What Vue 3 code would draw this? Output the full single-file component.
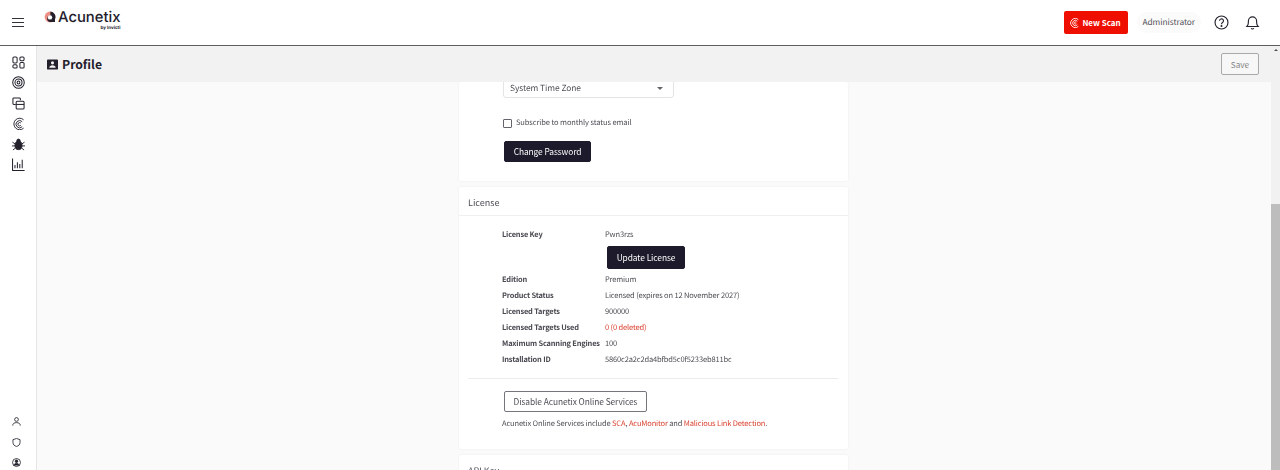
<script setup>
const licenseRows = [
  { label: 'Edition', value: 'Premium' },
  { label: 'Product Status', value: 'Licensed (expires on 12 November 2027)' },
  { label: 'Licensed Targets', value: '900000' },
  { label: 'Licensed Targets Used', value: '0 (0 deleted)', warn: true },
  { label: 'Maximum Scanning Engines', value: '100' },
  { label: 'Installation ID', value: '5860c2a2c2da4bfbd5c0f5233eb811bc' }
]
</script>

<template>
  <div class="app">
    <header class="topbar">
      <button class="burger" aria-label="Menu"><span></span><span></span><span></span></button>
      <div class="logo">
        <svg class="logo-mark" viewBox="0 0 12 12" width="12" height="12">
          <circle cx="6" cy="6" r="5.4" fill="#ee8f86" />
          <path d="M6.4.6a5.4 5.4 0 0 1 4.6 7.6V11H6.6A3.2 3.2 0 0 1 6.4 4.4 z" fill="#23202c" />
          <circle cx="6" cy="6.4" r="2.2" fill="#fff" />
        </svg>
        <div class="logo-text">
          <span class="logo-name">Acunetix</span>
          <span class="logo-by">by Invicti</span>
        </div>
      </div>
      <div class="top-actions">
        <button class="new-scan">
          <svg viewBox="0 0 12 12" width="10" height="10" fill="none" stroke="#fff" stroke-width="1.1">
            <path d="M10 2A5.4 5.4 0 1 0 10 10" />
            <path d="M8.8 3.8A3.2 3.2 0 1 0 8.8 8.2" />
            <path d="M7.5 5.2A1.2 1.2 0 1 0 7.5 6.8" />
          </svg>
          New Scan
        </button>
        <span class="user">Administrator</span>
        <svg class="top-icon" viewBox="0 0 16 16" width="15" height="15" fill="none" stroke="#23202c" stroke-width="1.2">
          <circle cx="8" cy="8" r="6.9" />
          <path d="M5.9 6.2a2.1 2.1 0 1 1 3.2 1.8C8.4 8.5 8 8.9 8 9.8" />
          <circle cx="8" cy="11.8" r=".5" fill="#23202c" />
        </svg>
        <svg class="top-icon bell" viewBox="0 0 16 16" width="15" height="15" fill="none" stroke="#23202c" stroke-width="1.2">
          <path d="M2 12.2c1-1 1.6-2 1.6-4.2V6.4a4.4 4.4 0 0 1 8.8 0V8c0 2.2.6 3.2 1.6 4.2z" />
          <path d="M6.5 14.2c.8.9 2.2.9 3 0" />
        </svg>
      </div>
    </header>

    <div class="body">
      <aside class="sidebar">
        <nav class="nav">
          <svg viewBox="0 0 14 14" width="13" height="13" fill="none" stroke="#23202c" stroke-width="1.1">
            <rect x="1" y="1" width="4.5" height="6.5" rx="1.2" />
            <rect x="8.5" y="1" width="4.5" height="4" rx="1.2" />
            <rect x="1" y="9.5" width="4.5" height="3.5" rx="1.2" />
            <rect x="8.5" y="7" width="4.5" height="6" rx="1.2" />
          </svg>
          <svg viewBox="0 0 14 14" width="13" height="13" fill="none" stroke="#23202c" stroke-width="1.1">
            <circle cx="7" cy="7" r="6.2" />
            <circle cx="7" cy="7" r="3.8" />
            <circle cx="7" cy="7" r="1.5" />
          </svg>
          <svg viewBox="0 0 14 14" width="13" height="13" fill="none" stroke="#23202c" stroke-width="1.1">
            <path d="M9 3.5V2a1 1 0 0 0-1-1H2a1 1 0 0 0-1 1v5a1 1 0 0 0 1 1h2" />
            <rect x="4.5" y="4.5" width="8.5" height="8.5" rx="1.2" />
            <path d="M4.5 8h8.5" />
          </svg>
          <svg viewBox="0 0 14 14" width="13" height="13" fill="none" stroke="#23202c" stroke-width="1">
            <path d="M12.5 3A6.2 6.2 0 1 0 12.5 12" />
            <path d="M11 5A3.9 3.9 0 1 0 11 10.5" />
            <path d="M9.5 6.5A1.8 1.8 0 1 0 9.5 9" />
          </svg>
          <svg viewBox="0 0 14 14" width="13" height="13" fill="#23202c" stroke="#23202c" stroke-width="1">
            <ellipse cx="7" cy="8" rx="3.8" ry="4.5" />
            <circle cx="7" cy="3" r="1.8" />
            <path d="M0.5 4.5l3 2M13.5 4.5l-3 2M0 8.5h3.5M14 8.5h-3.5M1 13l2.8-2.3M13 13l-2.8-2.3" fill="none" />
          </svg>
          <svg viewBox="0 0 14 14" width="13" height="13" fill="none" stroke="#23202c" stroke-width="1.1">
            <path d="M.6.5v12.9h13" />
            <path d="M3.2 7.5v3.5M5.8 4.5v6.5M8.4 6.5v4.5M11 2v9" />
          </svg>
        </nav>
        <nav class="nav nav-bottom">
          <svg viewBox="0 0 12 12" width="9" height="9" fill="none" stroke="#23202c" stroke-width="1.1">
            <circle cx="6" cy="3.3" r="2.5" />
            <path d="M1 11.5c0-3 2-4 5-4s5 1 5 4" />
          </svg>
          <svg viewBox="0 0 12 12" width="9" height="9" fill="none" stroke="#23202c" stroke-width="1.1">
            <path d="M6 .7l4.7 1.5v4c0 2.6-2 4.3-4.7 5.1C3.3 10.5 1.3 8.8 1.3 6.2v-4z" />
          </svg>
          <svg viewBox="0 0 12 12" width="9" height="9" fill="none" stroke="#23202c" stroke-width="1.1">
            <circle cx="6" cy="6" r="5.3" />
            <circle cx="6" cy="4.3" r="1.7" fill="#23202c" />
            <path d="M2.5 10c.4-2 1.7-3 3.5-3s3.1 1 3.5 3" fill="#23202c" />
          </svg>
        </nav>
      </aside>

      <main class="main">
        <div class="titlebar">
          <h1>
            <svg viewBox="0 0 12 12" width="11" height="11">
              <path fill-rule="evenodd" fill="#23202c" d="M1 .5h10a1 1 0 0 1 1 1v9a1 1 0 0 1-1 1H1a1 1 0 0 1-1-1v-9a1 1 0 0 1 1-1zM6 2.5a1.7 1.7 0 1 0 0 3.4 1.7 1.7 0 0 0 0-3.4zM2.500 9.500h7c0-1.700-1.500-2.700-3.500-2.700s-3.500 1-3.500 2.700z" />
            </svg>
            Profile
          </h1>
          <button class="save" disabled>Save</button>
        </div>

        <div class="content">
          <section class="card card-first">
            <div class="select">
              <span>System Time Zone</span>
              <i class="caret"></i>
            </div>
            <label class="check">
              <span class="box"></span>
              Subscribe to monthly status email
            </label>
            <button class="btn btn-dark btn-password">Change Password</button>
          </section>

          <section class="card card-license">
            <h2>License</h2>
            <div class="rows">
              <div class="row">
                <span class="row-label">License Key</span>
                <span>Pwn3rzs</span>
              </div>
              <button class="btn btn-dark btn-update">Update License</button>
              <div v-for="row in licenseRows" :key="row.label" class="row">
                <span class="row-label">{{ row.label }}</span>
                <span :class="{ warn: row.warn }">{{ row.value }}</span>
              </div>
            </div>
            <hr />
            <button class="btn btn-outline">Disable Acunetix Online Services</button>
            <p class="note">
              Acunetix Online Services include <a>SCA</a>, <a>AcuMonitor</a> and
              <a>Malicious Link Detection</a>.
            </p>
          </section>

          <section class="card card-api">
            <h2>API Key</h2>
          </section>
        </div>
      </main>

      <div class="scrollbar">
        <i class="arrow"></i>
        <div class="thumb"></div>
      </div>
    </div>
  </div>
</template>

<style scoped>
.app {
  height: 470px;
  display: flex;
  flex-direction: column;
  overflow: hidden;
  font-family: "Noto Sans CJK SC", "Noto Sans", sans-serif;
  text-rendering: geometricPrecision;
  color: #4f4d55;
  background: #fafafa;
}

.topbar {
  height: 45px;
  flex: none;
  display: flex;
  align-items: center;
  padding: 0 20px 0 12px;
  background: #fff;
  border-bottom: 1px solid #5f5f5f;
}

.burger {
  width: 12px;
  display: flex;
  flex-direction: column;
  gap: 3px;
  padding: 0;
  border: 0;
  background: none;
}

.burger span {
  height: 1px;
  background: #33313a;
}

.logo {
  margin-left: 20px;
  margin-top: -4px;
  display: flex;
  gap: 2px;
  align-items: flex-start;
}

.logo-mark {
  margin-top: 1px;
}

.logo-text {
  display: flex;
  flex-direction: column;
  align-items: flex-end;
}

.logo-name {
  font-family: Inter, sans-serif;
  font-size: 14.8px;
  line-height: 15px;
  font-weight: 500;
  color: #23202c;
}

.logo-by {
  font-family: Inter, sans-serif;
  font-size: 4.5px;
  line-height: 6px;
  margin-top: 1px;
  font-weight: 700;
  color: #23202c;
}

.top-actions {
  margin-left: auto;
  display: flex;
  align-items: center;
}

.new-scan {
  width: 64px;
  height: 23px;
  padding: 0;
  display: flex;
  align-items: center;
  justify-content: center;
  gap: 2px;
  border: 0;
  border-radius: 2px;
  background: #ee0f00;
  color: #fff;
  font: 700 8px "Noto Sans CJK SC", sans-serif;
}

.user {
  margin-left: 9px;
  padding: 3px 6px;
  border-radius: 10px;
  background: #fbfbfb;
  font-size: 8.3px;
  letter-spacing: -0.05px;
  line-height: 15px;
  color: #4f4d55;
}

.top-icon {
  margin-left: 13px;
}

.bell {
  margin-left: 16px;
}

.body {
  flex: 1;
  min-height: 0;
  display: flex;
}

.sidebar {
  width: 36px;
  flex: none;
  display: flex;
  flex-direction: column;
  justify-content: space-between;
  background: #fff;
  border-right: 1px solid #e6e6e6;
}

.nav {
  padding-top: 10px;
  display: flex;
  flex-direction: column;
  align-items: center;
  gap: 7.4px;
}

.nav-bottom {
  padding: 0 0 3px;
  gap: 11.5px;
  margin-right: 3px;
}

.main {
  flex: 1;
  min-width: 0;
  display: flex;
  flex-direction: column;
}

.titlebar {
  height: 36px;
  flex: none;
  display: flex;
  align-items: center;
  justify-content: space-between;
  padding: 0 12px 0 10px;
  background: #f2f2f2;
}

h1 {
  margin: 0;
  display: flex;
  align-items: center;
  gap: 4px;
  font-size: 12.2px;
  font-weight: 700;
  color: #23202c;
}

.save {
  width: 38px;
  height: 22px;
  padding: 0;
  border: 1px solid #a9a9a9;
  border-radius: 2px;
  background: #f7f7f7;
  color: #858585;
  font: 400 8.2px "Noto Sans CJK SC", sans-serif;
}

.content {
  flex: 1;
  min-height: 0;
  overflow: hidden;
  display: flex;
  flex-direction: column;
  align-items: center;
  gap: 6px;
  padding-right: 1px;
  will-change: transform;
}

.card {
  width: 389px;
  flex: none;
  box-sizing: border-box;
  background: #fff;
  border-radius: 2px;
  box-shadow: 0 0 2px rgba(0, 0, 0, 0.08);
}

.card-first {
  height: 99px;
  padding: 0 0 0 44px;
}

.select {
  margin-top: -5px;
  width: 171px;
  height: 21px;
  box-sizing: border-box;
  display: flex;
  align-items: center;
  justify-content: space-between;
  padding: 1px 10px 0 6px;
  border: 1px solid #e4e4e4;
  border-radius: 3px;
  font-size: 8.4px;
  letter-spacing: -0.05px;
}

.caret {
  border: 3px solid transparent;
  border-top-color: #66646b;
  border-bottom: 0;
}

.check {
  margin-top: 19px;
  display: flex;
  align-items: center;
  gap: 4px;
  font-size: 7.5px;
  letter-spacing: -0.1px;
  line-height: 12px;
}

.box {
  width: 7px;
  height: 7px;
  border: 1px solid #66646b;
  border-radius: 1px;
}

.btn {
  display: block;
  padding: 0 0 2px;
  border-radius: 2px;
  font-family: "Noto Sans CJK SC", sans-serif;
  font-size: 8.4px;
  letter-spacing: -0.08px;
}

.btn-dark {
  border: 1px solid #1c1a2b;
  background: #1c1a2b;
  color: #fff;
}

.btn-password {
  margin: 12px 0 0 1px;
  width: 87px;
  height: 21px;
}

h2 {
  margin: 0;
  height: 29px;
  box-sizing: border-box;
  padding: 8px 9px 0;
  border-bottom: 1px solid #f0f0f0;
  font-size: 9px;
  line-height: 15px;
  font-weight: 400;
  color: #4f4d55;
}

.card-license {
  height: 262px;
}

.rows {
  padding: 10px 0 0 43px;
  font-size: 7.5px;
  letter-spacing: -0.15px;
}

.row {
  height: 16px;
  box-sizing: border-box;
  padding-top: 1px;
  display: flex;
  align-items: center;
}

.row-label {
  width: 103px;
  font-weight: 700;
  font-size: 7.4px;
  letter-spacing: -0.16px;
  color: #4a4850;
}

.warn {
  color: #d9412f;
}

.btn-update {
  margin: 4px 0 2px 105px;
  width: 78px;
  height: 23px;
}

hr {
  margin: 11px 10px 0 9px;
  border: 0;
  border-top: 1px solid #ececec;
}

.btn-outline {
  margin: 12px 0 0 45px;
  width: 143px;
  height: 21px;
  border: 1px solid #77757c;
  background: #fff;
  color: #4f4d55;
}

.note {
  margin: 6px 0 0 43px;
  font-size: 7.5px;
  letter-spacing: -0.15px;
  line-height: 12px;
}

.note a {
  color: #d9412f;
}

.card-api {
  height: 40px;
}

.scrollbar {
  width: 9px;
  flex: none;
  display: flex;
  flex-direction: column;
  align-items: center;
  background: #f1f1f1;
}

.arrow {
  margin-top: 3px;
  border: 2px solid transparent;
  border-bottom: 2px solid #505050;
  border-top: 0;
}

.thumb {
  margin-top: 153px;
  flex: 1;
  width: 100%;
  background: #bdbdbd;
}
</style>
